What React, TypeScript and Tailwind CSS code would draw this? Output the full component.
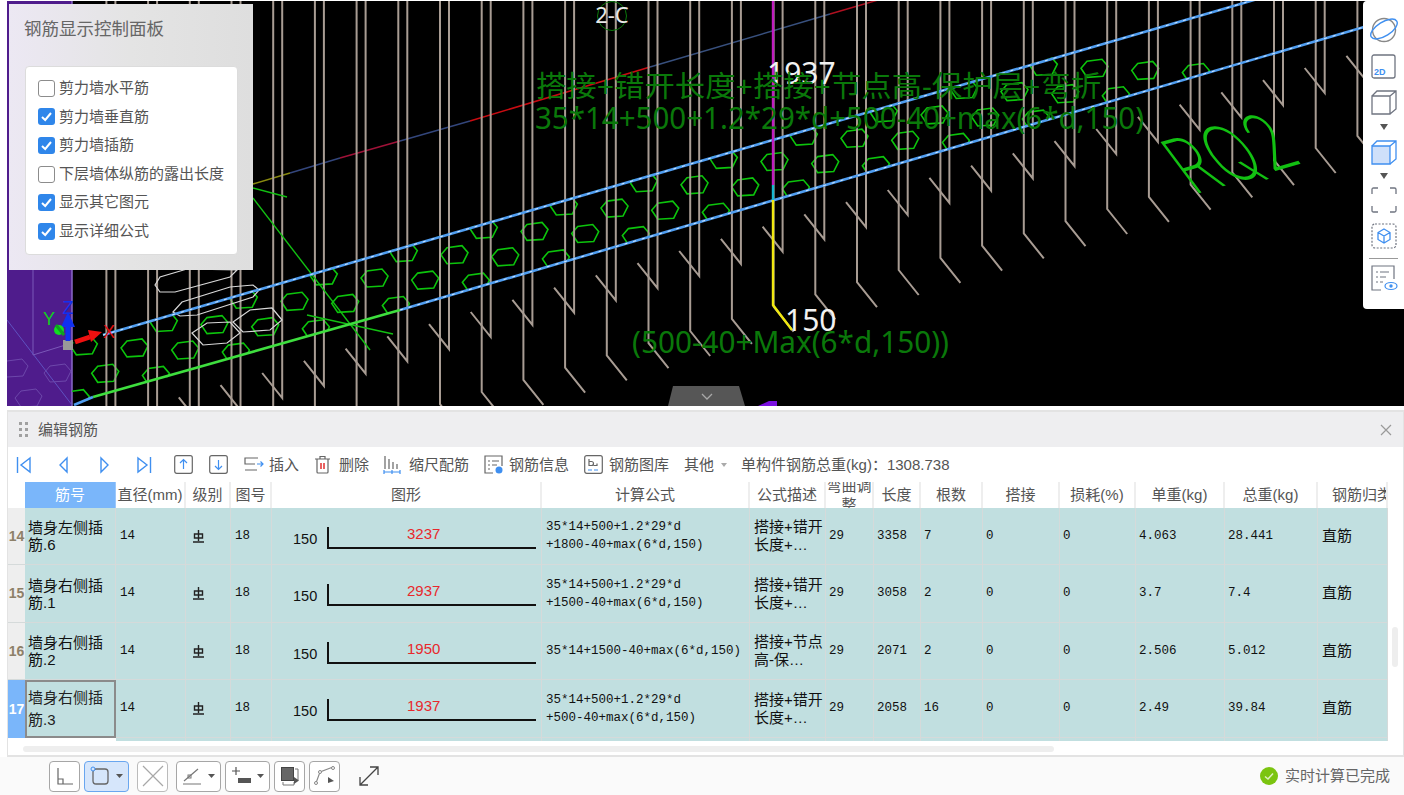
import React from 'react';

const sans = "[font-family:'Liberation_Sans','Noto_Sans_CJK_SC',sans-serif]";
const mono = "[font-family:'Liberation_Mono','Noto_Sans_CJK_SC',monospace]";

const panelOptions = [
  { label: '剪力墙水平筋', checked: false },
  { label: '剪力墙垂直筋', checked: true },
  { label: '剪力墙插筋', checked: true },
  { label: '下层墙体纵筋的露出长度', checked: false },
  { label: '显示其它图元', checked: true },
  { label: '显示详细公式', checked: true },
];

const headers = ['筋号', '直径(mm)', '级别', '图号', '图形', '计算公式', '公式描述', '弯曲调整', '长度', '根数', '搭接', '损耗(%)', '单重(kg)', '总重(kg)', '钢筋归类'];

const rows = [
  { no: '14', name: ['墙身左侧插', '筋.6'], len: '3237', formula: ['35*14+500+1.2*29*d', '+1800-40+max(6*d,150)'], desc: ['搭接+错开', '长度+…'], total: '3358', count: '7', unit: '4.063', sum: '28.441' },
  { no: '15', name: ['墙身右侧插', '筋.1'], len: '2937', formula: ['35*14+500+1.2*29*d', '+1500-40+max(6*d,150)'], desc: ['搭接+错开', '长度+…'], total: '3058', count: '2', unit: '3.7', sum: '7.4' },
  { no: '16', name: ['墙身右侧插', '筋.2'], len: '1950', formula: ['35*14+1500-40+max(6*d,150)'], desc: ['搭接+节点', '高-保…'], total: '2071', count: '2', unit: '2.506', sum: '5.012' },
  { no: '17', name: ['墙身右侧插', '筋.3'], len: '1937', formula: ['35*14+500+1.2*29*d', '+500-40+max(6*d,150)'], desc: ['搭接+错开', '长度+…'], total: '2058', count: '16', unit: '2.49', sum: '39.84' },
];

const range = (a: number, b: number) => Array.from({ length: b - a + 1 }, (_, i) => a + i);
const upperY = (x: number) => 227 - 0.2915 * (x - 470);
const lowerY = (x: number) => 289 - 0.2915 * (x - 470);

const hexAt = (cx: number, cy: number) =>
  [[-13, 0], [-7, -7], [8, -9], [14, -2], [9, 8], [-7, 9]].map(([x, y]) => `${cx + x},${cy + y}`).join(' ');

const hexes: [number, number][] = [];
range(-12, 22).forEach((i) => {
  range(-6, 8).forEach((j) => {
    hexes.push([563.3 + i * 50.7 - j * 80, 206 + i * 2.1 + j * 23.3]);
  });
});

const Scene = () => (
  <svg width="1397" height="405" viewBox="7 1 1397 405" className="block">
    <defs>
      <clipPath id="slab">
        <polygon points={`72,${upperY(72)} 1364,${upperY(1364)} 1364,${lowerY(1364)} 72,${lowerY(72)}`} />
      </clipPath>
    </defs>
    {/* purple slab at the left edge */}
    <rect x="7" y="0" width="65" height="406" fill="#4f1c8c" />
    <line x1="72" y1="0" x2="72" y2="406" stroke="#8a68c8" strokeWidth="1.5" />
    <line x1="33" y1="270" x2="33" y2="355" stroke="#7a58b8" />
    <line x1="7" y1="320" x2="72" y2="405" stroke="#5f52c0" />
    <line x1="33" y1="355" x2="72" y2="343" stroke="#7a58b8" />
    {[[14, 368], [57, 373], [28, 398]].map(([x, y]) => (
      <polygon key={x} points={hexAt(x, y)} fill="none" stroke="#6d48ab" />
    ))}

    {/* colored axis line */}
    <line x1="253" y1="184" x2="290" y2="173" stroke="#8a8a10" strokeWidth="1.5" />
    <line x1="290" y1="173" x2="340" y2="158" stroke="#33467c" strokeWidth="1.5" />
    <line x1="340" y1="158" x2="400" y2="141" stroke="#a01238" strokeWidth="1.5" />
    <line x1="400" y1="141" x2="470" y2="121" stroke="#33467c" strokeWidth="1.5" />
    <line x1="470" y1="121" x2="650" y2="67" stroke="#c80c12" strokeWidth="1.6" />
    <line x1="650" y1="67" x2="830" y2="14" stroke="#38507e" strokeWidth="1.5" />
    <line x1="830" y1="14" x2="878" y2="0" stroke="#b01020" strokeWidth="1.5" />

    {/* hexagon ties */}
    <g clipPath="url(#slab)">
      {hexes.map(([x, y], i) => (
        <polygon key={i} points={hexAt(x, y)} fill="none" stroke="#0cc40c" strokeWidth="1.6" />
      ))}
    </g>

    {/* vertical bars with hooks */}
    <g fill="none" stroke="#a89c93" strokeWidth="2">
      {range(-9, 21).map((k) => {
        const x1 = 481.7 + 41.7 * k;
        const x2 = x1 + 9;
        const y1 = 392 - 12.2 * k;
        const y2 = 337 - 12.2 * k;
        return (
          <g key={k}>
            <polyline points={`${x1},0 ${x1},${y1} ${x1 + 20},${y1 + 25}`} />
            <polyline points={`${x2},0 ${x2},${y2} ${x2 - 20},${y2 - 25}`} />
          </g>
        );
      })}
    </g>

    {/* loose green lines */}
    <g stroke="#12c012" strokeWidth="1.4">
      <line x1="253" y1="188" x2="287" y2="197" />
      <line x1="253" y1="198" x2="370" y2="350" />
      <line x1="307" y1="315" x2="393" y2="334" />
    </g>

    {/* white outlines around the corner bars */}
    <g fill="none" stroke="#d8d8d8" strokeWidth="1.2">
      <polygon points="155,285 160,277 187,269 237,270 230,277 175,292 160,292" />
      <polygon points="173,312 182,302 230,287 253,285 259,290 253,297 197,315 180,316" />
      <polygon points="233,322 250,310 272,308 282,320 270,330 243,332" />
      <polygon points="192,333 207,323 230,322 240,333 227,343 203,345" />
    </g>

    {/* slab edges */}
    <line x1="103" y1="335" x2="1364" y2="-32" stroke="#4f9df0" strokeWidth="2.6" />
    <line x1="103" y1="335" x2="1364" y2="-32" stroke="#d4e8ff" strokeWidth="1" strokeDasharray="3 6" />
    <line x1="400" y1="310" x2="1364" y2="27" stroke="#4f9df0" strokeWidth="2.6" />
    <line x1="400" y1="310" x2="1364" y2="27" stroke="#d4e8ff" strokeWidth="1" strokeDasharray="3 6" />
    <line x1="93" y1="397" x2="400" y2="310" stroke="#3ede3e" strokeWidth="2.6" />
    <line x1="74" y1="405" x2="93" y2="397" stroke="#4f9df0" strokeWidth="2.6" />

    {/* highlighted bar */}
    <line x1="773" y1="0" x2="773" y2="185" stroke="#c01cc0" strokeWidth="2.4" />
    <line x1="773" y1="185" x2="773" y2="200" stroke="#18b8d0" strokeWidth="2.4" />
    <polyline points="773,200 773,305 792,330" fill="none" stroke="#f0e810" strokeWidth="2.4" />

    {/* axis gizmo */}
    <rect x="63" y="340" width="10" height="10" fill="#999" />
    <line x1="68" y1="341" x2="68" y2="325" stroke="#1030f0" strokeWidth="5" />
    <polygon points="68,312 75,327 61,327" fill="#1030f0" />
    <line x1="75" y1="342" x2="90" y2="337" stroke="#f01010" strokeWidth="5" />
    <polygon points="102,332 88,330 91,342" fill="#f01010" />
    <circle cx="59" cy="330" r="5" fill="#10e020" />
    <line x1="64" y1="335" x2="56" y2="325" stroke="#10a020" strokeWidth="3" />

    {/* labels in the model */}
    <circle cx="612" cy="16" r="14.5" fill="none" stroke="#0a7a0a" />
    <text x="612" y="23" textAnchor="middle" fontSize="22" fill="#e8e8e8" fontFamily="Noto Sans">2-C</text>
    <text x="68" y="314" textAnchor="middle" fontSize="18" fill="#1030f0" fontFamily="Liberation Sans">Z</text>
    <text x="49" y="325" textAnchor="middle" fontSize="18" fill="#10d020" fontFamily="Liberation Sans">Y</text>
    <text x="109" y="338" textAnchor="middle" fontSize="18" fill="#e01010" fontFamily="Liberation Sans">X</text>
    <text x="767" y="84" fontSize="30" fill="#f2f2f2" fontFamily="Noto Sans">1937</text>
    <text x="785" y="331" fontSize="30" fill="#f2f2f2" fontFamily="Noto Sans">150</text>
    <g fill="#0a780a" fontFamily="Noto Sans, Noto Sans CJK SC">
      <text x="536" y="97" fontSize="29" textLength="565" lengthAdjust="spacingAndGlyphs">搭接+错开长度+搭接+节点高-保护层+弯折</text>
      <text x="535" y="129" fontSize="31" textLength="609" lengthAdjust="spacingAndGlyphs">35*14+500+1.2*29*d+500-40+max(6*d,150)</text>
      <text x="632" y="353" fontSize="31" textLength="317" lengthAdjust="spacingAndGlyphs">(500-40+Max(6*d,150))</text>
    </g>
    <text
      transform="matrix(0.64,-0.185,0.6,0.8,1193,195)"
      fontSize="88"
      fontWeight="200"
      fill="#12c012"
      fontFamily="Inter"
    >
      RQ2
    </text>
    <polygon points="758,406 769,401 777,401 777,406" fill="#7a10e0" />
  </svg>
);

const Check = ({ checked }: { checked: boolean }) =>
  checked ? (
    <span className="w-[17px] h-[17px] rounded-[3px] bg-[#2f86ea] flex items-center justify-center shrink-0">
      <svg width="13" height="13" viewBox="0 0 13 13">
        <path d="M2 7l3.2 3L11 3" fill="none" stroke="#fff" strokeWidth="2" />
      </svg>
    </span>
  ) : (
    <span className="w-[17px] h-[17px] rounded-[3px] bg-white border border-[#8c8c8c] shrink-0" />
  );

const ControlPanel = () => (
  <div className="absolute left-[2px] top-[3px] w-[244px] h-[266px] bg-linear-to-r from-[#ece8f3] via-[#e4e4e4] to-[#dedede] pl-[15px] pt-[13px]">
    <div className="text-[17.5px] leading-[24px] text-[#666]">钢筋显示控制面板</div>
    <div className="ml-px mt-[25px] w-[213px] h-[189px] bg-white border border-[#dcdcdc] rounded-[4px] pl-[12px] pt-[7px] flex flex-col">
      {panelOptions.map((o) => (
        <div key={o.label} className="h-[28.6px] flex items-center gap-[4px] text-[15px] text-[#555] whitespace-nowrap">
          <Check checked={o.checked} />
          <span>{o.label}</span>
        </div>
      ))}
    </div>
  </div>
);

const gray = '#6f7480';
const blue = '#3f8ff0';

const SideToolbar = () => (
  <div className="absolute right-0 top-0 w-[41px] h-[308px] bg-white rounded-l-[4px] flex flex-col items-center">
    <svg width="30" height="30" viewBox="0 0 30 30" className="mt-[14px]">
      <circle cx="15" cy="15" r="11.5" fill="none" stroke="#888" strokeWidth="1.4" />
      <ellipse cx="15" cy="14" rx="15" ry="7" transform="rotate(-32 15 14)" fill="none" stroke={blue} strokeWidth="1.4" />
    </svg>
    <svg width="26" height="26" viewBox="0 0 26 26" className="mt-[9px]">
      <rect x="1" y="1" width="23" height="23" rx="2" fill="none" stroke={gray} strokeWidth="1.3" />
      <text x="3" y="21" fontSize="9" fontWeight="700" fill={blue} fontFamily="Liberation Sans">2D</text>
    </svg>
    <svg width="26" height="26" viewBox="0 0 26 26" className="mt-[9px]">
      <path d="M1 7h18v18H1zM1 7l5-5h19v18l-6 5M19 7l6-5" fill="none" stroke={gray} strokeWidth="1.3" />
    </svg>
    <svg width="10" height="6" viewBox="0 0 10 6" className="mt-[9px]"><path d="M1 0h8L5 6z" fill="#555" /></svg>
    <svg width="26" height="26" viewBox="0 0 26 26" className="mt-[9px]">
      <path d="M1 7h18v18H1z" fill="#cfe0fa" stroke={blue} strokeWidth="1.3" />
      <path d="M1 7l5-5h19v18l-6 5M19 7l6-5" fill="none" stroke={blue} strokeWidth="1.3" />
    </svg>
    <svg width="10" height="6" viewBox="0 0 10 6" className="mt-[8px]"><path d="M1 0h8L5 6z" fill="#555" /></svg>
    <svg width="26" height="26" viewBox="0 0 26 26" className="mt-[8px]">
      <path d="M1 7V2.5Q1 1 2.5 1H7M19 1h4.5Q25 1 25 2.5V7M25 19v4.5Q25 25 23.500 25H19M7 25H2.500Q1 25 1 23.500V19" fill="none" stroke={gray} strokeWidth="1.3" />
    </svg>
    <svg width="26" height="26" viewBox="0 0 26 26" className="mt-[10px]">
      <rect x="1" y="1" width="24" height="24" rx="3" fill="none" stroke={gray} strokeWidth="1.2" strokeDasharray="2 1.500" />
      <path d="M13 6l6 3.500v7L13 20l-6-3.500v-7zM7 9.500l6 3.500 6-3.500M13 13v7" fill="none" stroke={blue} strokeWidth="1.3" />
    </svg>
    <div className="w-[29px] h-px bg-[#999] mt-[9px] shrink-0" />
    <svg width="28" height="26" viewBox="0 0 28 26" className="mt-[6px]">
      <path d="M11 25H2V1h22v13" fill="none" stroke={gray} strokeWidth="1.2" />
      <path d="M6 7h2M10 7h9M6 12h2M10 12h6M6 17h2M10 17h3" fill="none" stroke={gray} strokeWidth="1.2" />
      <ellipse cx="21" cy="21" rx="6" ry="3.500" fill="none" stroke={blue} strokeWidth="1.2" />
      <circle cx="21" cy="21" r="1.700" fill={blue} />
    </svg>
  </div>
);

const Collapse = () => (
  <div className="absolute left-[661px] bottom-0 w-[77px] h-[20px] bg-[#565656] [clip-path:polygon(5px_0,71px_0,77px_100%,0_100%)] flex items-center justify-center">
    <svg width="12" height="7" viewBox="0 0 12 7"><path d="M1 1l5 5 5-5" fill="none" stroke="#a8a8a8" strokeWidth="1.3" /></svg>
  </div>
);

const Nav = ({ d, bar }: { d: string; bar?: number }) => (
  <span className="w-[30px] flex justify-center shrink-0">
    <svg width="16" height="18" viewBox="0 0 16 18">
      <path d={d} fill="none" stroke={blue} strokeWidth="1.400" />
      {bar !== undefined && <line x1={bar} y1="1" x2={bar} y2="17" stroke={blue} strokeWidth="1.400" />}
    </svg>
  </span>
);

const BoxArrow = ({ up, className }: { up?: boolean; className: string }) => (
  <svg width="19" height="19" viewBox="0 0 19 19" className={className}>
    <rect x="0.700" y="0.700" width="17.600" height="17.600" rx="2" fill="none" stroke="#666" strokeWidth="1.200" />
    <path d={up ? 'M9.500 14V5M6 8l3.500-3.500L13 8' : 'M9.500 5v9M6 11l3.500 3.500L13 11'} fill="none" stroke={blue} strokeWidth="1.200" />
  </svg>
);

const Toolbar = () => (
  <div className="h-[35px] bg-white flex items-center pl-px text-[15px] text-[#555] whitespace-nowrap">
    <span className="flex gap-[10px]">
      <Nav d="M14 2L5 9l9 7z" bar={1.500} />
      <Nav d="M11 2L4 9l7 7z" />
      <Nav d="M5 2l7 7-7 7z" />
      <Nav d="M2 2l9 7-9 7z" bar={14.500} />
    </span>
    <BoxArrow up className="ml-[15px]" />
    <BoxArrow className="ml-[16px]" />
    <svg width="20" height="16" viewBox="0 0 20 16" className="ml-[16px]">
      <path d="M14 1H1v6h10M1 13h12" fill="none" stroke="#666" strokeWidth="1.200" />
      <path d="M13 7h6M16.500 4.500L19 7l-2.500 2.500" fill="none" stroke={blue} strokeWidth="1.200" />
    </svg>
    <span className="ml-[5px] pt-px">插入</span>
    <svg width="17" height="19" viewBox="0 0 17 19" className="ml-[15px]">
      <path d="M1 4h15M6 4V1.500h5V4M3 4v13q0 1 1 1h9q1 0 1-1V4" fill="none" stroke="#666" strokeWidth="1.200" />
      <path d="M7 8v6M10 8v6" stroke="#e02020" strokeWidth="1.400" />
    </svg>
    <span className="ml-[8px] pt-px">删除</span>
    <svg width="18" height="19" viewBox="0 0 18 19" className="ml-[14px]">
      <path d="M2 1v13M6 4v10M10 7v7M14 9v5" stroke="#666" strokeWidth="1.200" />
      <path d="M1 17h16M1 15v4M9 15v4M17 15v4" stroke={blue} strokeWidth="1.200" fill="none" />
    </svg>
    <span className="ml-[8px] pt-px">缩尺配筋</span>
    <svg width="20" height="19" viewBox="0 0 20 19" className="ml-[15px]">
      <path d="M9 18H1V1h17v10" fill="none" stroke="#666" strokeWidth="1.200" />
      <path d="M4 6h2M8 6h7M4 10h2M8 10h5M4 14h2" stroke="#666" strokeWidth="1.200" />
      <circle cx="15" cy="15" r="3.500" fill={blue} />
    </svg>
    <span className="ml-[5px] pt-px">钢筋信息</span>
    <svg width="19" height="19" viewBox="0 0 19 19" className="ml-[15px]">
      <rect x="0.700" y="0.700" width="17.600" height="17.600" rx="2" fill="none" stroke="#666" strokeWidth="1.200" />
      <path d="M5 4v6.500h2.500a2 2 0 0 0 0-4H5M9.500 10.500h3.500v-2" fill="none" stroke="#666" strokeWidth="1.200" />
      <path d="M4 15h4M10 15h4" stroke={blue} strokeWidth="1.200" />
    </svg>
    <span className="ml-[6px] pt-px">钢筋图库</span>
    <span className="ml-[15px] pt-px">其他</span>
    <svg width="6" height="4" viewBox="0 0 6 4" className="ml-[7px]"><path d="M0 0h6L3 4z" fill="#aaa" /></svg>
    <span className="ml-[14px] pt-px">单构件钢筋总重(kg)：1308.738</span>
  </div>
);

const GradeMark = () => (
  <svg width="13" height="13" viewBox="0 0 13 13">
    <path d="M6.500 0v11M1 12h11M2.500 8V4h8v4zM2.500 8h8" fill="none" stroke="#222" strokeWidth="1.400" />
  </svg>
);

const cellBase = 'bg-[#c1dfe0] border-r border-b border-[#d5dada] flex items-center overflow-hidden';
const headBase = 'bg-white border-r-2 border-[#eeeeee] flex items-center justify-center text-[15px] text-[#555] overflow-hidden text-center';

const RebarTable = () => (
  <div className="grid grid-cols-[17px_91px_70px_45px_41px_270px_208px_76px_48px_47px_62px_77px_76px_89px_93px_70px] grid-rows-[26px_57px_58px_57px_58px_3px]">
    <div className="bg-white" />
    {headers.map((h, i) => {
      if (i === 0) {
        return (
          <div key={h} className="bg-[#7ab6fa] border-r border-[#9cc8fa] flex items-center justify-center text-[15px] text-white">
            {h}
          </div>
        );
      }
      if (h === '弯曲调整') {
        return <div key={h} className={`${headBase} leading-[19px]`}>{h}</div>;
      }
      if (h === '钢筋归类') {
        return <div key={h} className={`${headBase} !justify-start pl-[14px] whitespace-nowrap border-r-0`}>{h}</div>;
      }
      return <div key={h} className={`${headBase} whitespace-nowrap`}>{h}</div>;
    })}

    {rows.map((r) => {
      const selected = r.no === '17';
      return (
        <React.Fragment key={r.no}>
          <div
            className={
              selected
                ? 'bg-[#7ab6fa] flex items-center justify-center text-[14px] font-bold text-white whitespace-nowrap'
                : 'bg-[#eeeeee] border-b border-[#d5dada] flex items-center justify-center text-[14px] font-bold text-[#8d8068] whitespace-nowrap'
            }
          >
            {r.no}
          </div>
          <div
            className={
              selected
                ? 'bg-[#c1dfe0] border-2 border-[#8b8b8b] pl-px flex flex-col justify-center text-[15px] leading-[22px] text-[#222]'
                : `${cellBase} pl-[3px] !flex-col !items-start justify-center text-[15px] leading-[17px] text-[#111]`
            }
          >
            {r.name.map((n) => (
              <div key={n} className="whitespace-nowrap">{n}</div>
            ))}
          </div>
          <div className={`${cellBase} ${mono} pl-[4px] text-[12.500px] text-[#111]`}>14</div>
          <div className={`${cellBase} pl-[6px]`}><GradeMark /></div>
          <div className={`${cellBase} ${mono} pl-[4px] text-[12.500px] text-[#111]`}>18</div>
          <div className={`${cellBase} pl-[21px] text-[#111]`}>
            <span className="text-[14.5px] mt-[7px]">150</span>
            <span className="ml-[10px] mt-[3px] w-[209px] h-[22px] border-l-2 border-b-2 border-[#111] flex justify-center pr-[18px] text-[15px] leading-[14px] text-[#e8282c]">
              {r.len}
            </span>
          </div>
          <div className={`${cellBase} ${mono} !flex-col !items-start justify-center pl-[4px] text-[12.500px] leading-[18px] text-[#111] whitespace-nowrap`}>
            {r.formula.map((f) => (
              <div key={f}>{f}</div>
            ))}
          </div>
          <div className={`${cellBase} !flex-col !items-start justify-center pl-[4px] text-[15px] leading-[18px] text-[#111] whitespace-nowrap`}>
            {r.desc.map((d) => (
              <div key={d}>{d}</div>
            ))}
          </div>
          {['29', r.total, r.count, '0', '0', r.unit, r.sum].map((v, i) => (
            <div key={i} className={`${cellBase} ${mono} pl-[3px] text-[12.500px] text-[#111]`}>{v}</div>
          ))}
          <div className={`${cellBase} pl-[4px] text-[15px] text-[#111]`}>直筋</div>
        </React.Fragment>
      );
    })}
    {range(0, 15).map((i) => (
      <div key={i} className={i === 0 || i === 1 ? 'bg-white' : 'bg-[#c1dfe0] border-r border-[#d5dada]'} />
    ))}
  </div>
);

const Btn = ({ wide, active, disabled, className, children }: { wide?: boolean; active?: boolean; disabled?: boolean; className?: string; children: React.ReactNode }) => (
  <span
    className={`h-[31px] ${wide ? 'w-[45px]' : 'w-[31px]'} rounded-[4px] border flex items-center justify-center gap-[6px] shrink-0 ${
      active ? 'bg-[#d6e6fb] border-[#69a6ef]' : disabled ? 'bg-white border-[#bbbbbb]' : 'bg-white border-[#a6a6a6]'
    } ${className ?? ''}`}
  >
    {children}
  </span>
);

const Caret = () => (
  <svg width="7" height="4" viewBox="0 0 7 4"><path d="M0 0h7L3.500 4z" fill="#555" /></svg>
);

const BottomBar = () => (
  <div className="h-[38px] flex items-center pl-[49px] pr-[14px] bg-[#fafafa]">
    <Btn>
      <svg width="18" height="18" viewBox="0 0 18 18"><path d="M2 1v16h15M2 12h5v5" fill="none" stroke="#666" strokeWidth="1.200" /></svg>
    </Btn>
    <Btn wide active className="ml-[4px]">
      <svg width="20" height="20" viewBox="0 0 20 20">
        <rect x="3" y="3" width="15" height="15" rx="3" fill="none" stroke="#666" strokeWidth="1.300" />
        <circle cx="3" cy="3" r="2" fill="#d6e6fb" stroke={blue} strokeWidth="1" />
      </svg>
      <Caret />
    </Btn>
    <Btn disabled className="ml-[8px]">
      <svg width="22" height="22" viewBox="0 0 22 22"><path d="M1 1l20 20M21 1L1 21" stroke="#a8a8a8" strokeWidth="1.200" /></svg>
    </Btn>
    <Btn wide className="ml-[8px]">
      <svg width="20" height="18" viewBox="0 0 20 18">
        <path d="M1 17h18M2 14L16 2" fill="none" stroke="#777" strokeWidth="1.200" />
        <rect x="6" y="8" width="3" height="3" fill="none" stroke="#777" />
      </svg>
      <Caret />
    </Btn>
    <Btn wide className="ml-[4px]">
      <svg width="20" height="18" viewBox="0 0 20 18">
        <path d="M1 4h8M5 0v8" stroke="#555" strokeWidth="1.200" />
        <rect x="7" y="11" width="13" height="5" fill="#555" />
      </svg>
      <Caret />
    </Btn>
    <Btn className="ml-[4px]">
      <svg width="20" height="20" viewBox="0 0 20 20">
        <path d="M3 16v3h11v-3M15 3h3v11" fill="none" stroke="#777" />
        <rect x="1.500" y="1.500" width="12" height="13" fill="#666" stroke="#444" />
        <path d="M14 11l5 3.500-5 3.500z" fill="#555" />
      </svg>
    </Btn>
    <Btn className="ml-[4px]">
      <svg width="22" height="20" viewBox="0 0 22 20">
        <path d="M2 17L6 6l13-5" fill="none" stroke="#888" strokeWidth="1.100" />
        <circle cx="2" cy="17" r="1.500" fill="#fff" stroke="#888" />
        <circle cx="6" cy="6" r="1.500" fill="#fff" stroke="#888" />
        <circle cx="19" cy="2" r="1.500" fill="#fff" stroke="#888" />
        <path d="M14 11l6 4-6 2z" fill="#555" />
      </svg>
    </Btn>
    <svg width="20" height="20" viewBox="0 0 20 20" className="ml-[19px]">
      <path d="M1 19L19 1M11 1h8v8M1 11v8h8" fill="none" stroke="#444" strokeWidth="1.300" />
    </svg>
    <span className="ml-auto flex items-center gap-[7px] text-[15px] text-[#666] whitespace-nowrap">
      <svg width="18" height="18" viewBox="0 0 18 18">
        <circle cx="9" cy="9" r="9" fill="#7bc410" />
        <path d="M5 9.500l3 2.500 5-5.500" fill="none" stroke="#dff0c0" strokeWidth="1.500" />
      </svg>
      实时计算已完成
    </span>
  </div>
);

export default function App() {
  return (
    <div className={`${sans} w-[1404px] h-[795px] bg-white overflow-hidden flex flex-col`}>
      <div className="ml-[7px] mt-px h-[405px] shrink-0 relative bg-black overflow-hidden">
        <Scene />
        <ControlPanel />
        <SideToolbar />
        <Collapse />
      </div>

      <div className="ml-[7px] mt-[4px] h-[347px] shrink-0 border-l border-r border-t-2 border-b-2 border-[#e3e3e3] flex flex-col relative">
        <div className="h-[35px] bg-[#eeeef0] flex items-center text-[15px] text-[#555] shrink-0">
          <span className="ml-[11px] grid grid-cols-2 gap-[3px]">
            {range(1, 6).map((i) => (
              <span key={i} className="w-[3px] h-[3px] bg-[#a0a0a0]" />
            ))}
          </span>
          <span className="ml-[10px] pt-[2px]">编辑钢筋</span>
          <svg width="12" height="12" viewBox="0 0 12 12" className="ml-auto mr-[11px]">
            <path d="M1 1l10 10M11 1L1 11" stroke="#999" strokeWidth="1.200" />
          </svg>
        </div>
        <Toolbar />
        <RebarTable />
        <div className="mt-[5px] ml-[15px] w-[1031px] h-[6px] rounded-full bg-[#eeeeee]" />
        <div className="absolute left-[1384px] top-[215px] w-[6px] h-[40px] rounded-full bg-[#eeeeee]" />
      </div>

      <BottomBar />
    </div>
  );
}
